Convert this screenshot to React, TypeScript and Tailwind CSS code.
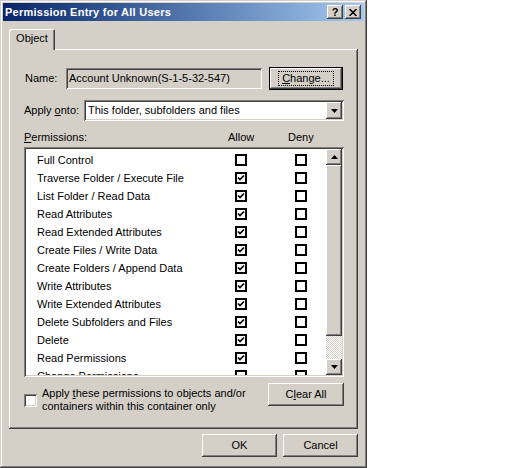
import React from "react";

// Classic 3D edges
const raised =
  "shadow-[inset_-1px_-1px_#404040,inset_1px_1px_#ffffff,inset_-2px_-2px_#808080,inset_2px_2px_#d4d0c8]";
const sunken =
  "shadow-[inset_1px_1px_#808080,inset_-1px_-1px_#ffffff,inset_2px_2px_#404040,inset_-2px_-2px_#d4d0c8]";

const permissions = [
  { name: "Full Control", allow: false },
  { name: "Traverse Folder / Execute File", allow: true },
  { name: "List Folder / Read Data", allow: true },
  { name: "Read Attributes", allow: true },
  { name: "Read Extended Attributes", allow: true },
  { name: "Create Files / Write Data", allow: true },
  { name: "Create Folders / Append Data", allow: true },
  { name: "Write Attributes", allow: true },
  { name: "Write Extended Attributes", allow: true },
  { name: "Delete Subfolders and Files", allow: true },
  { name: "Delete", allow: true },
  { name: "Read Permissions", allow: true },
  { name: "Change Permissions", allow: false },
];

function FlatCheck({ checked }: { checked: boolean }) {
  return (
    <span className="flex h-[12px] w-[12px] shrink-0 items-center justify-center border-2 border-black bg-white">
      {checked && (
        <svg viewBox="0 0 8 8" className="h-[8px] w-[8px]" aria-hidden="true">
          <path d="M1 3.5 L3 5.6 L7 1.5" stroke="black" strokeWidth={1.7} fill="none" />
        </svg>
      )}
    </span>
  );
}

function Arrow({ up }: { up?: boolean }) {
  return (
    <svg viewBox="0 0 7 4" className="h-[4px] w-[7px]" aria-hidden="true">
      <polygon points={up ? "3.5,0 7,4 0,4" : "0,0 7,0 3.5,4"} fill="black" />
    </svg>
  );
}

function Button({ children, className = "" }: { children: React.ReactNode; className?: string }) {
  return (
    <div className={`flex h-[23px] w-[75px] items-center justify-center bg-[#d4d0c8] ${raised} ${className}`}>
      {children}
    </div>
  );
}

export default function App() {
  return (
    <div className="min-h-[468px] bg-white font-['Liberation_Sans',Arial,sans-serif] text-[11px] leading-[13px] text-black">
      <div className="flex h-[468px] w-[367px] flex-col bg-[#d4d0c8] p-[3px] shadow-[inset_-1px_-1px_#404040,inset_1px_1px_#d4d0c8,inset_-2px_-2px_#808080,inset_2px_2px_#ffffff]">
        {/* Title bar */}
        <div className="flex h-[18px] items-center justify-between bg-linear-to-r from-[#0a246a] to-[#a6caf0] pl-[2px] pr-[3px]">
          <span className="font-bold tracking-[0.25px] text-white">Permission Entry for All Users</span>
          <div className="flex gap-[2px]">
            <div className={`flex h-[14px] w-[16px] items-center justify-center bg-[#d4d0c8] font-bold ${raised}`}>
              ?
            </div>
            <div className={`flex h-[14px] w-[16px] items-center justify-center bg-[#d4d0c8] ${raised}`}>
              <svg viewBox="0 0 8 7" className="h-[7px] w-[8px]" aria-hidden="true">
                <path d="M0.5 0 L7.5 7 M7.5 0 L0.5 7" stroke="black" strokeWidth={1.5} />
              </svg>
            </div>
          </div>
        </div>

        {/* Tabs */}
        <div className="ml-[6px] mt-[8px] flex">
          <div className="relative z-10 -mb-[1px] flex h-[21px] w-[46px] items-start justify-center rounded-t-[2px] bg-[#d4d0c8] pt-[3px] shadow-[inset_1px_1px_#ffffff,inset_-1px_0_#404040,inset_-2px_0_#808080]">
            Object
          </div>
        </div>

        {/* Tab panel */}
        <div className="ml-[6px] flex h-[380px] w-[349px] flex-col pl-[15px] shadow-[inset_-1px_-1px_#404040,inset_1px_1px_#ffffff,inset_-2px_-2px_#808080]">
          {/* Name row */}
          <div className="mt-[18px] flex h-[23px] items-center">
            <span className="w-[42px] pl-[1px]">Name:</span>
            <div className={`flex h-[21px] w-[196px] items-center pl-[3px] ${sunken}`}>
              Account Unknown(S-1-5-32-547)
            </div>
            <div className="ml-[7px] flex h-[23px] w-[74px] items-center justify-center bg-[#d4d0c8] shadow-[inset_0_0_0_1px_#000000,inset_-2px_-2px_#404040,inset_2px_2px_#ffffff,inset_-3px_-3px_#808080]">
              <span className="border border-dotted border-black px-[3px]">
                <u>C</u>hange...
              </span>
            </div>
          </div>

          {/* Apply onto row */}
          <div className="mt-[10px] flex h-[21px] items-center">
            <span className="w-[60px]">
              Apply <u>o</u>nto:
            </span>
            <div className={`flex h-[21px] w-[260px] items-center bg-white pl-[4px] pr-[2px] ${sunken}`}>
              <span className="flex-1">This folder, subfolders and files</span>
              <div className={`flex h-[17px] w-[16px] items-center justify-center bg-[#d4d0c8] ${raised}`}>
                <Arrow />
              </div>
            </div>
          </div>

          {/* Header */}
          <div className="mt-[10px] flex h-[13px] items-center">
            <span className="w-[204px]">
              <u>P</u>ermissions:
            </span>
            <span className="w-[60px]">Allow</span>
            <span>Deny</span>
          </div>

          {/* Permission list */}
          <div className={`mt-[3px] flex h-[230px] w-[320px] overflow-hidden bg-white p-[2px] ${sunken}`}>
            <div className="flex w-[300px] flex-col overflow-hidden pt-[2px]">
              {permissions.map((p) => (
                <div key={p.name} className="flex h-[18px] shrink-0 items-center pl-[11px]">
                  <span className="w-[198px]">{p.name}</span>
                  <FlatCheck checked={p.allow} />
                  <span className="ml-[48px]">
                    <FlatCheck checked={false} />
                  </span>
                </div>
              ))}
            </div>
            {/* Scrollbar */}
            <div className="flex w-[16px] flex-col">
              <div className={`flex h-[16px] shrink-0 items-center justify-center bg-[#d4d0c8] ${raised}`}>
                <Arrow up />
              </div>
              <div className={`h-[171px] shrink-0 bg-[#d4d0c8] ${raised}`} />
              <div className="flex-1 bg-[repeating-conic-gradient(#ffffff_0_25%,#d4d0c8_0_50%)] bg-[length:2px_2px]" />
              <div className={`flex h-[16px] shrink-0 items-center justify-center bg-[#d4d0c8] ${raised}`}>
                <Arrow />
              </div>
            </div>
          </div>

          {/* Bottom row */}
          <div className="mt-[6px] flex w-[320px] items-start justify-between">
            <div className="mt-[4px] flex items-center">
              <span className={`h-[13px] w-[13px] shrink-0 bg-white ${sunken}`} />
              <span className="ml-[5px]">
                Apply <u>t</u>hese permissions to objects and/or
                <br />
                containers within this container only
              </span>
            </div>
            <Button className="w-[76px]">
              C<u>l</u>ear All
            </Button>
          </div>
        </div>

        {/* Dialog buttons */}
        <div className="mt-[5px] flex w-[355px] justify-end gap-[6px]">
          <Button>OK</Button>
          <Button>Cancel</Button>
        </div>
      </div>
    </div>
  );
}
